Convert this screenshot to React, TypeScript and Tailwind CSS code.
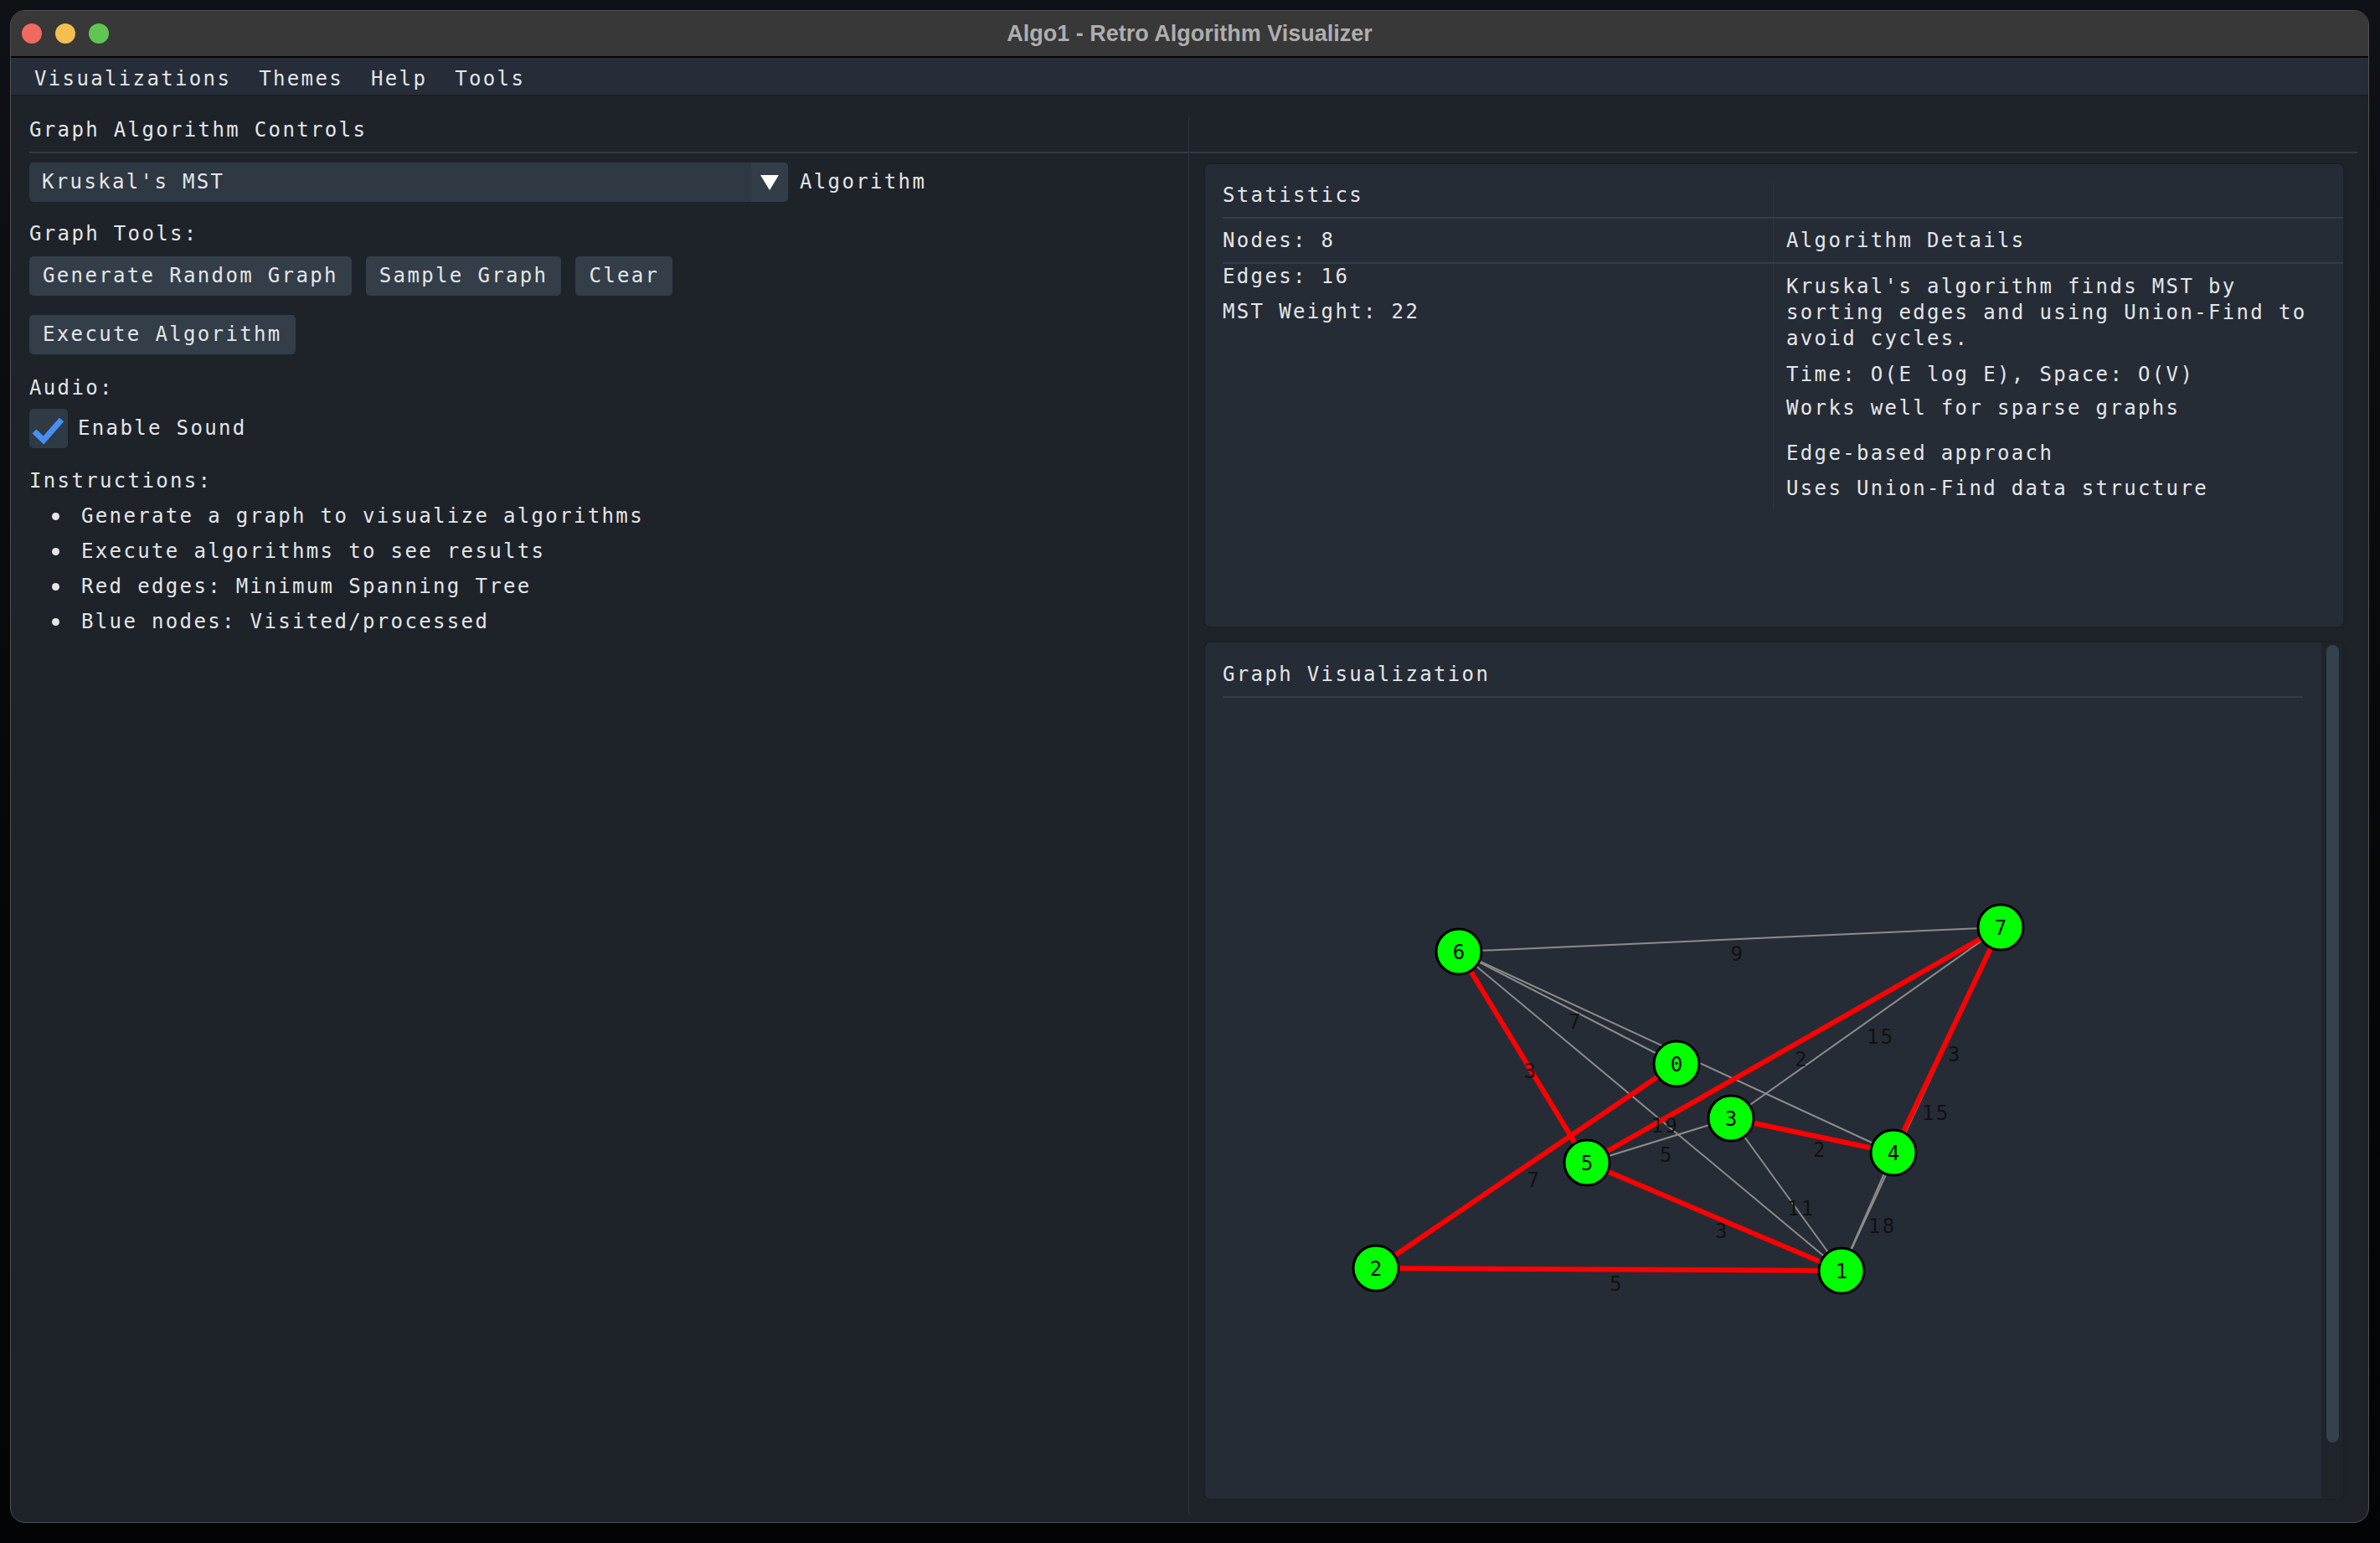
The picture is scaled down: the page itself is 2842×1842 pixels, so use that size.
import React from "react";

const MONO = "font-['DejaVu_Sans_Mono',monospace] text-[24px] leading-[31px] tracking-[2.35px] text-[#e4e6e8]";

// page coordinates of graph nodes
const NODES: [number, number][] = [
  [2002, 1270],
  [2199, 1517],
  [1643, 1514],
  [2067, 1335],
  [2261, 1376],
  [1895, 1388],
  [1742, 1136],
  [2389, 1107],
];

// from, to, weight (null = label hidden under a node), in MST
const EDGES: [number, number, number | null, boolean][] = [
  [6, 7, 9, false],
  [6, 0, 7, false],
  [6, 4, null, false],
  [6, 1, 19, false],
  [5, 3, 5, false],
  [3, 7, 15, false],
  [3, 1, 11, false],
  [4, 1, 18, false],
  [7, 1, 15, false],
  [6, 5, 3, true],
  [0, 2, 7, true],
  [5, 7, 2, true],
  [3, 4, 2, true],
  [7, 4, 3, true],
  [5, 1, 3, true],
  [2, 1, 5, true],
];

function GraphCanvas() {
  const gray = EDGES.filter((e) => !e[3]);
  const red = EDGES.filter((e) => e[3]);
  return (
    <svg width={1290} height={900} viewBox="1460 845 1290 900" className="block mt-[12px]">
      {gray.map(([a, b], i) => (
        <line key={"g" + i} x1={NODES[a][0]} y1={NODES[a][1]} x2={NODES[b][0]} y2={NODES[b][1]} stroke="#8c8c8c" strokeWidth={2} />
      ))}
      {red.map(([a, b], i) => (
        <line key={"r" + i} x1={NODES[a][0]} y1={NODES[a][1]} x2={NODES[b][0]} y2={NODES[b][1]} stroke="#ff0000" strokeWidth={6} />
      ))}
      {EDGES.map(([a, b, w], i) => {
        if (w === null) return null;
        const mx = (NODES[a][0] + NODES[b][0]) / 2;
        const my = (NODES[a][1] + NODES[b][1]) / 2;
        return (
          <text key={"t" + i} x={mx + 1} y={my + 25} fill="#111111" fontSize={24} fontFamily="DejaVu Sans Mono, monospace" letterSpacing={2.35}>
            {w}
          </text>
        );
      })}
      {NODES.map(([x, y], i) => (
        <g key={"n" + i}>
          <circle cx={x} cy={y} r={27} fill="#00ff00" stroke="#000000" strokeWidth={3} />
          <text x={x} y={y + 9} textAnchor="middle" fill="#000000" fontSize={24} fontFamily="DejaVu Sans Mono, monospace">
            {i}
          </text>
        </g>
      ))}
    </svg>
  );
}

function Button({ label }: { label: string }) {
  return (
    <div className="flex h-[47px] items-center justify-center rounded-[5px] bg-[#333e49] px-[16px]">
      <span className={MONO}>{label}</span>
    </div>
  );
}

function Bullet({ text }: { text: string }) {
  return (
    <div className="mt-[11px] flex items-center">
      <span className="ml-[27px] h-[9px] w-[9px] rounded-full bg-[#e4e6e8]" />
      <span className={"ml-[26px] " + MONO}>{text}</span>
    </div>
  );
}

function LeftPanel() {
  return (
    <div className="flex w-[1394px] flex-col border-r border-[#2a323b]">
      <div className="h-[41px] pl-[9px]">
        <span className={MONO}>Graph Algorithm Controls</span>
      </div>
      <div className="ml-[9px] h-[2px] bg-[#303a44]" />
      <div className="flex flex-col pl-[9px] pt-[2px]">
        {/* algorithm combo */}
        <div className="mt-[9px] flex items-center">
          <div className="flex h-[47px] w-[906px] overflow-hidden rounded-[5px] bg-[#2f3944]">
            <div className={"flex flex-1 items-center pl-[15px] " + MONO}>Kruskal's MST</div>
            <div className="flex w-[46px] items-center justify-center border-l border-[#2a333d] bg-[#323d48]">
              <svg width={24} height={20} viewBox="0 0 24 20">
                <polygon points="1,1 23,1 12,19" fill="#ffffff" />
              </svg>
            </div>
          </div>
          <span className={"ml-[14px] " + MONO}>Algorithm</span>
        </div>

        <div className={"mt-[23px] " + MONO}>Graph Tools:</div>
        <div className="mt-[11px] flex gap-[17px]">
          <Button label="Generate Random Graph" />
          <Button label="Sample Graph" />
          <Button label="Clear" />
        </div>
        <div className="mt-[23px] flex">
          <Button label="Execute Algorithm" />
        </div>

        <div className={"mt-[25px] " + MONO}>Audio:</div>
        <div className="mt-[9px] flex items-center gap-[12px]">
          <div className="h-[47px] w-[46px] rounded-[5px] bg-[#2f3a45]">
            <svg width={46} height={47} viewBox="0 0 46 47">
              <polyline points="6,27 17,37.5 38.5,13" fill="none" stroke="#4690f4" strokeWidth={7} />
            </svg>
          </div>
          <span className={MONO}>Enable Sound</span>
        </div>

        <div className={"mt-[24px] " + MONO}>Instructions:</div>
        <Bullet text="Generate a graph to visualize algorithms" />
        <Bullet text="Execute algorithms to see results" />
        <Bullet text="Red edges: Minimum Spanning Tree" />
        <Bullet text="Blue nodes: Visited/processed" />
      </div>
    </div>
  );
}

function StatsBox() {
  return (
    <div className="h-[556px] rounded-[8px] border-2 border-[#1b2027] bg-[#262c36] pl-[21px] pt-[22px]">
      <div className="flex h-[43px] border-b-2 border-[#323c46]">
        <div className={"w-[658px] border-r border-[#2d353e] " + MONO}>Statistics</div>
        <div className="flex-1" />
      </div>
      <div className="flex h-[54px] border-b-2 border-[#323c46]">
        <div className={"w-[658px] border-r border-[#2d353e] pt-[11px] " + MONO}>Nodes: 8</div>
        <div className={"flex-1 pl-[15px] pt-[11px] " + MONO}>Algorithm Details</div>
      </div>
      <div className="flex h-[293px]">
        <div className="flex w-[658px] flex-col border-r border-[#2d353e]">
          <div className={MONO}>Edges: 16</div>
          <div className={"mt-[11px] " + MONO}>MST Weight: 22</div>
        </div>
        <div className="flex flex-1 flex-col pl-[15px] pt-[12px]">
          <div className={MONO}>
            Kruskal's algorithm finds MST by
            <br />
            sorting edges and using Union-Find to
            <br />
            avoid cycles.
          </div>
          <div className={"mt-[12px] " + MONO}>Time: O(E log E), Space: O(V)</div>
          <div className={"mt-[9px] " + MONO}>Works well for sparse graphs</div>
          <div className={"mt-[23px] " + MONO}>Edge-based approach</div>
          <div className={"mt-[11px] " + MONO}>Uses Union-Find data structure</div>
        </div>
      </div>
    </div>
  );
}

function GraphBox() {
  return (
    <div className="mt-[15px] flex flex-1 overflow-hidden rounded-[8px] border-2 border-[#1b2027] bg-[#262c36]">
      <div className="flex flex-1 flex-col pl-[21px] pr-[22px] pt-[23px]">
        <div className={MONO}>Graph Visualization</div>
        <div className="mt-[10px] h-[2px] bg-[#323c46]" />
        <GraphCanvas />
      </div>
      <div className="flex w-[26px] justify-center rounded-tr-[6px] bg-[#1f242b] pt-[3px]">
        <div className="h-[952px] w-[15px] rounded-full bg-[#35414c]" />
      </div>
    </div>
  );
}

export default function App() {
  return (
    <div className="h-[1842px] w-[2842px] bg-[linear-gradient(180deg,#0e1116_0%,#050608_60%,#030405_100%)] pl-[12px] pt-[12px]">
      <div className="flex h-[1806px] w-[2817px] flex-col overflow-hidden rounded-[18px] border border-[#505050] bg-[#1e232a]">
        {/* title bar */}
        <div className="grid h-[56px] grid-cols-[1fr_auto_1fr] items-center border-b-2 border-[#050505] bg-[#383838]">
          <div className="flex gap-[16px] pl-[13px]">
            <span className="h-[24px] w-[24px] rounded-full bg-[#ee6a5f]" />
            <span className="h-[24px] w-[24px] rounded-full bg-[#f5bf4f]" />
            <span className="h-[24px] w-[24px] rounded-full bg-[#61c554]" />
          </div>
          <div className="font-['Liberation_Sans',Arial,sans-serif] text-[27px] font-bold text-[#aeaeae]">
            Algo1 - Retro Algorithm Visualizer
          </div>
          <div />
        </div>

        {/* menu bar */}
        <div className="flex h-[46px] gap-[33px] border-b-2 border-[#1a1e24] bg-[#262d38] pl-[28px] pt-[10px]">
          <span className={MONO}>Visualizations</span>
          <span className={MONO}>Themes</span>
          <span className={MONO}>Help</span>
          <span className={MONO}>Tools</span>
        </div>

        {/* content table */}
        <div className="flex flex-1 px-[13px] pb-[10px] pt-[25px]">
          <LeftPanel />
          <div className="flex flex-1 flex-col">
            <div className="h-[41px]" />
            <div className="h-[2px] bg-[#303a44]" />
            <div className="flex flex-1 flex-col pb-[16px] pl-[17px] pr-[15px] pt-[11px]">
              <StatsBox />
              <GraphBox />
            </div>
          </div>
        </div>
      </div>
    </div>
  );
}
